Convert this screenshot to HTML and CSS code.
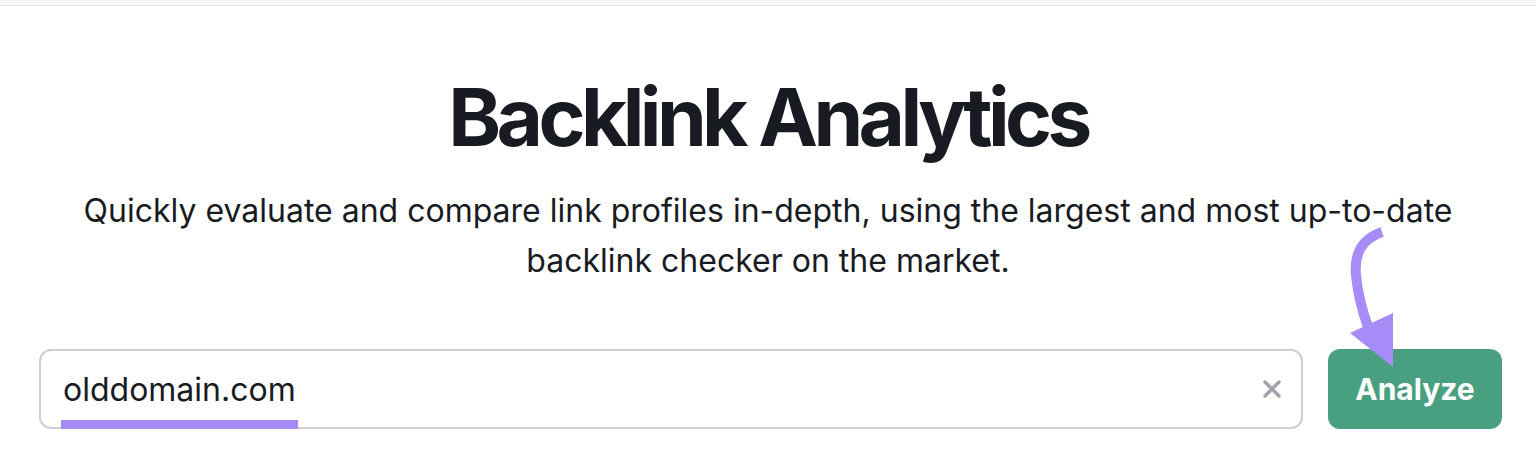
FILE: index.html
```html
<!DOCTYPE html>
<html lang="en">
<head>
<meta charset="utf-8">
<title>Backlink Analytics</title>
<link rel="stylesheet" href="styles.css">
</head>
<body>
<div class="topbar"></div>
<main class="hero">
  <h1 class="title">Backlink Analytics</h1>
  <p class="subtitle">Quickly evaluate and compare link profiles in-depth, using the largest and most up-to-date<br>backlink checker on the market.</p>
  <form class="search">
    <div class="field">
      <span class="value">olddomain.com</span>
      <span class="clear" aria-label="Clear">
        <svg width="22" height="22" viewBox="0 0 22 22"><path d="M4 4 L18 18 M18 4 L4 18" stroke="#a0a3ab" stroke-width="3.4" stroke-linecap="round" fill="none"/></svg>
      </span>
      <span class="underline"></span>
    </div>
    <button class="analyze" type="button">Analyze</button>
    <svg class="arrow" width="80" height="150" viewBox="0 0 80 150">
      <path d="M52 7 C32 14 24 28 26 50 C28 72 33 88 38 102" stroke="#a78bf7" stroke-width="10" fill="none" stroke-linecap="butt"/>
      <polygon points="20,108 63,88 63,142" fill="#a78bf7"/>
    </svg>
  </form>
</main>
</body>
</html>
```
FILE: styles.css
```css
* { box-sizing: border-box; }
html, body { margin: 0; padding: 0; background: #fff; }
body { font-family: Inter, "Noto Sans", sans-serif; color: #191b23; width: 1536px; height: 456px; overflow: hidden; }
.topbar { height: 6px; background: #f5f5f8; border-bottom: 1px solid #e4e4e9; }
.hero { display: flex; flex-direction: column; align-items: center; }
.title { margin: 65px 0 0; font-size: 80px; font-weight: 700; line-height: 92px; letter-spacing: -4.6px; }
.subtitle { margin: 23px 0 0; font-size: 32px; line-height: 50px; text-align: center; font-weight: 400; letter-spacing: 0; }
.search { position: relative; align-self: stretch; display: flex; gap: 25px; padding: 0 34px 0 39px; margin-top: 63px; }
.field { flex: 1; height: 80px; border: 2px solid #cfcfd3; border-radius: 12px; display: flex; align-items: center; justify-content: space-between; padding: 0 18px 0 22px; position: relative; }
.value { font-size: 32px; }
.underline { position: absolute; left: 20px; bottom: -2px; width: 237px; height: 9px; background: #a68af6; }
.clear { display: flex; }
.analyze { width: 174px; height: 80px; border: 0; border-radius: 12px; background: #48a080; color: #fff; font-family: Inter, sans-serif; font-size: 30px; font-weight: 700; }
.arrow { position: absolute; left: 1330px; top: -124px; }
```
